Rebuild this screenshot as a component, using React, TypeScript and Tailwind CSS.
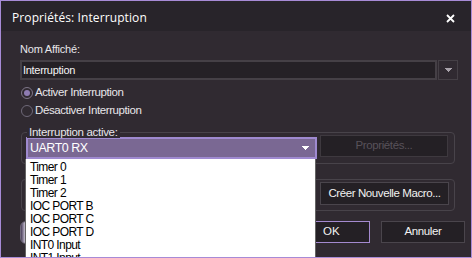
import React from "react";

const items = [
  "Timer 0",
  "Timer 1",
  "Timer 2",
  "IOC PORT B",
  "IOC PORT C",
  "IOC PORT D",
  "INT0 Input",
  "INT1 Input",
];

function Arrow({ color }: { color: string }) {
  return (
    <svg width="7" height="4" viewBox="0 0 7 4">
      <path d="M0 0H7V1H6V2H5V3H4V4H3V3H2V2H1V1H0Z" fill={color} />
    </svg>
  );
}

export default function App() {
  const sans = { fontFamily: '"Liberation Sans", Arial, sans-serif' };
  return (
    <div
      className="relative w-[472px] h-[258px] overflow-hidden border border-[#a78bd6] bg-[#302a31] flex flex-col text-[#e8e6ea]"
      style={sans}
    >
      {/* Title bar */}
      <div className="h-[30px] shrink-0 bg-[#28242a] flex items-center justify-between pl-[11px] pr-[16px]">
        <span
          className="text-[12px] text-white pt-[3px] tracking-[0.1px]"
          style={{ fontFamily: '"Open Sans", "Noto Sans", sans-serif' }}
        >
          Propriétés: Interruption
        </span>
        <svg width="9" height="9" viewBox="0 0 9 9" className="mt-[5px]">
          <path d="M1 1L8 8M8 1L1 8" stroke="#ffffff" strokeWidth="1.8" />
        </svg>
      </div>

      {/* Body */}
      <div className="flex flex-col pl-[19px] pt-[11px]">
        <div className="h-[14px] leading-[14px] text-[11px] tracking-[-0.2px]">Nom Affiché:</div>

        <div className="mt-[4px] flex h-[20px] gap-[1px]">
          <div className="w-[417px] h-[20px] bg-[#252126] border-2 border-[#454046] flex items-center pl-[1px] text-[11px] tracking-[-0.3px] text-[#f4f4f4]">
            Interruption
          </div>
          <div className="w-[20px] h-[20px] border border-[#454046] bg-[#302a31] flex items-center justify-center">
            <Arrow color="#a8a2aa" />
          </div>
        </div>

        <div className="mt-[4px] h-[18px] flex items-center gap-[2px] text-[11.5px] tracking-[-0.4px]">
          <div className="w-[12px] h-[12px] ml-[1px] rounded-full border border-[#7e7688] flex items-center justify-center">
            <div className="w-[6px] h-[6px] rounded-full bg-[#8e7cb2]" />
          </div>
          <span>Activer Interruption</span>
        </div>
        <div className="h-[18px] flex items-center gap-[2px] text-[11.5px] tracking-[-0.4px]">
          <div className="w-[12px] h-[12px] ml-[1px] rounded-full border border-[#6e6878]" />
          <span>Désactiver Interruption</span>
        </div>

        {/* Group 1 */}
        <div className="relative mt-[12px] ml-[1px] w-[434px] h-[32px] rounded-[4px] border border-[#48434a] flex items-start pl-[4px] gap-[3px]">
          <span className="absolute left-[5px] top-[-7px] px-[2px] bg-[#302a31] text-[11.5px] leading-[12px] tracking-[-0.3px]">
            Interruption active:
          </span>
          <div className="mt-[4px] w-[291px] h-[22px] bg-[#7a6893] border-2 border-[#9f8ad0] flex items-center justify-between pl-[2px] pr-[6px] text-[12.5px] tracking-[-0.5px] text-white">
            <span>UART0 RX</span>
            <Arrow color="#ffffff" />
          </div>
          <div className="mt-[2px] w-[128px] h-[22px] bg-[#242025] border border-[#3e393f] flex items-center justify-center text-[11.5px] tracking-[-0.4px] text-[#58525a]">
            Propriétés...
          </div>
        </div>

        {/* Group 2 */}
        <div className="relative mt-[15px] ml-[1px] w-[434px] h-[32px] rounded-[4px] border border-[#48434a] flex items-start justify-end pr-[5px]">
          <div className="mt-[2px] w-[129px] h-[23px] bg-[#242025] border border-[#4a454c] flex items-center justify-center text-[11.5px] tracking-[-0.4px] text-[#f2f2f2]">
            Créer Nouvelle Macro...
          </div>
        </div>

        {/* Bottom buttons */}
        <div className="mt-[10px] h-[22px] flex items-start">
          <div className="w-[12px] h-[23px] rounded-l-[6px] border border-[#6e6878] bg-gradient-to-r from-[#4a3e5a] via-[#e9e4f0] to-[#7c6a98]" />
          <div className="ml-[254px] w-[84px] h-[22px] bg-[#242025] border border-[#a48ad0] flex items-center pl-[36px] text-[11.5px] text-[#f2f2f2]">
            OK
          </div>
          <div className="ml-[11px] w-[84px] h-[22px] bg-[#242025] border border-[#4a454c] flex items-center justify-center text-[11.5px] tracking-[-0.4px] text-[#f2f2f2]">
            Annuler
          </div>
        </div>
      </div>

      {/* Dropdown list (overlay) */}
      <div className="absolute left-[24px] top-[158px] w-[291px] h-[120px] bg-white border-l border-r border-[#646464] flex flex-col pl-[4px] pt-[2px]">
        {items.map((t) => (
          <div key={t} className="h-[13px] leading-[13px] text-[12px] tracking-[-0.6px] text-black">
            {t}
          </div>
        ))}
      </div>
    </div>
  );
}
